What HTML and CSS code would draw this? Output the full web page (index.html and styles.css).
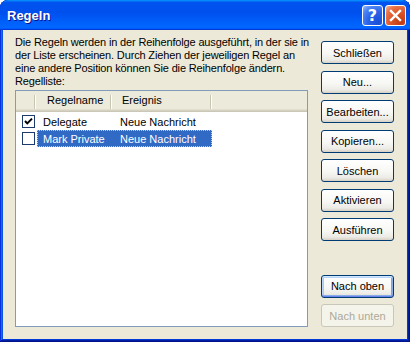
FILE: index.html
```html
<!DOCTYPE html>
<html>
<head>
<meta charset="utf-8">
<link rel="stylesheet" href="styles.css">
</head>
<body>
<div class="window">
  <div class="titlebar">
    <span class="title">Regeln</span>
    <div class="controls">
      <span class="ctl help">?</span>
      <span class="ctl close"><svg width="19" height="19" viewBox="0 0 19 19"><path d="M5 5 L14 14 M14 5 L5 14" stroke="#fff" stroke-width="2.4" stroke-linecap="square" fill="none"/></svg></span>
    </div>
  </div>
  <div class="client">
    <div class="main">
      <p class="intro">Die Regeln werden in der Reihenfolge ausgeführt, in der sie in<br>der Liste erscheinen. Durch Ziehen der jeweiligen Regel an<br>eine andere Position können Sie die Reihenfolge ändern.<br>Regelliste:</p>
      <div class="listbox">
        <div class="lv-head">
          <div class="hcell h0"></div>
          <div class="hcell h1">Regelname</div>
          <div class="hcell h2">Ereignis</div>
        </div>
        <div class="lv-body">
          <div class="row">
            <div class="chk-cell"><span class="chk"><svg width="11" height="11" viewBox="0 0 11 11"><path d="M2 5 L4.3 7.4 L9 2.6" stroke="#000" stroke-width="2" fill="none"/></svg></span></div>
            <div class="sel"><span class="c1">Delegate</span><span class="c2">Neue Nachricht</span></div>
          </div>
          <div class="row">
            <div class="chk-cell"><span class="chk"></span></div>
            <div class="sel selected"><span class="c1">Mark Private</span><span class="c2">Neue Nachricht</span></div>
          </div>
        </div>
      </div>
    </div>
    <div class="side">
      <button class="btn">Schließen</button>
      <button class="btn">Neu...</button>
      <button class="btn">Bearbeiten...</button>
      <button class="btn">Kopieren...</button>
      <button class="btn">Löschen</button>
      <button class="btn">Aktivieren</button>
      <button class="btn">Ausführen</button>
      <div class="spacer"></div>
      <button class="btn default">Nach oben</button>
      <button class="btn" disabled>Nach unten</button>
    </div>
  </div>
</div>
</body>
</html>
```
FILE: styles.css
```css
html, body {
  margin: 0;
  padding: 0;
  background: #ffffff;
}
body {
  font-family: "Liberation Sans", Arial, sans-serif;
  font-size: 11px;
  color: #000;
}
.window {
  width: 410px;
  height: 342px;
  display: flex;
  flex-direction: column;
  background: #0831d9;
  border-radius: 8px 8px 0 0;
  overflow: hidden;
  box-shadow: inset -1px -1px #00138c, inset 1px 1px #0831d9, inset -2px -2px #001ea0, inset 2px 2px #166aee, inset -3px -3px #003bda, inset 3px 3px #0855dd;
}
.titlebar {
  height: 30px;
  flex: none;
  display: flex;
  align-items: center;
  padding: 0 4px 0 7px;
  background: linear-gradient(180deg, #0997ff, #0053ee 8%, #0050ee 40%, #06f 88%, #06f 93%, #005bff 95%, #003dd7 96%, #003dd7);
  border-radius: 8px 8px 0 0;
}
.title {
  flex: 1;
  color: #fff;
  font-weight: bold;
  font-size: 13px;
  text-shadow: 1px 1px #0f1089;
  padding-top: 1px;
}
.controls {
  display: flex;
  gap: 2px;
}
.ctl {
  width: 21px;
  height: 21px;
  box-sizing: border-box;
  border: 1px solid #fff;
  border-radius: 3px;
  display: flex;
  align-items: center;
  justify-content: center;
}
.help {
  background: radial-gradient(circle at 80% 85%, #1a4fd6 0%, #2a62e8 45%, #4d84f5 75%, #9ebcfb 100%);
  color: #fff;
  font-weight: bold;
  font-size: 16px;
  font-family: "DejaVu Sans", sans-serif;
}
.close {
  background: radial-gradient(circle at 80% 85%, #c03a12 0%, #dc5528 45%, #e8744a 75%, #f6b89e 100%);
}
.client {
  flex: 1;
  margin: 0 3px 3px 3px;
  background: #ece9d8;
  display: flex;
  gap: 13px;
  padding: 0 13px 12px 12px;
}
.main {
  width: 293px;
  display: flex;
  flex-direction: column;
  padding-top: 6px;
}
.intro {
  margin: 0;
  line-height: 13px;
  white-space: nowrap;
  letter-spacing: -0.15px;
}
.listbox {
  margin-top: 2px;
  flex: 1;
  border: 1px solid #7f9db9;
  background: #fff;
  display: flex;
  flex-direction: column;
}
.lv-head {
  height: 21px;
  flex: none;
  display: flex;
  background: #ebeadb;
  box-shadow: inset 0 -1px #cbc7b8, inset 0 -2px #d6d2c2, inset 0 -3px #e2decd;
}
.hcell {
  box-sizing: border-box;
  line-height: 19px;
  background:
    linear-gradient(#c7c5b2, #c7c5b2) no-repeat calc(100% - 1px) 4px / 1px 14px,
    linear-gradient(#fff, #fff) no-repeat 100% 4px / 1px 14px;
}
.h0 { width: 20px; }
.h1 { width: 76px; padding-left: 11px; }
.h2 { width: 100px; padding-left: 10px; }
.lv-body {
  padding-top: 1px;
}
.row {
  height: 17px;
  display: flex;
  align-items: center;
}
.chk-cell {
  width: 20px;
  height: 17px;
  display: flex;
  align-items: center;
  padding-left: 6px;
  box-sizing: border-box;
}
.chk {
  width: 13px;
  height: 13px;
  box-sizing: border-box;
  border: 1px solid #1c3a6e;
  background: #fff;
  display: flex;
}
.sel {
  margin-left: 1px;
  width: 175px;
  height: 17px;
  box-sizing: border-box;
  display: flex;
  align-items: center;
  border: 1px solid transparent;
}
.sel.selected {
  background: #316ac5;
  color: #fff;
  border: 1px dotted #e6c98c;
}
.c1 { width: 75px; padding-left: 5px; box-sizing: border-box; }
.c2 { padding-left: 7px; }
.side {
  width: 73px;
  display: flex;
  flex-direction: column;
  gap: 6.5px;
  padding-top: 11px;
}
.spacer { flex: 1; }
.btn {
  font: inherit;
  color: #000;
  height: 23px;
  width: 73px;
  flex: none;
  padding: 0;
  margin: 0;
  box-sizing: border-box;
  border: 1px solid #003c74;
  border-radius: 3px;
  background: linear-gradient(180deg, #ffffff 0%, #f7f7f4 55%, #ecebe6 85%, #d6d0c5 100%);
  text-align: center;
}
.btn.default {
  box-shadow: inset 0 1px #cee7ff, inset 0 -1px #6982ee, inset 1px 0 #bcd4f6, inset -1px 0 #89ade4, inset 0 2px #bcd4f6, inset 0 -2px #89ade4, inset 2px 0 #a9c8f5, inset -2px 0 #7ea5e6;
}
.btn:disabled {
  color: #aca899;
  border-color: #c9c7ba;
  background: #f5f4ea;
}
```
